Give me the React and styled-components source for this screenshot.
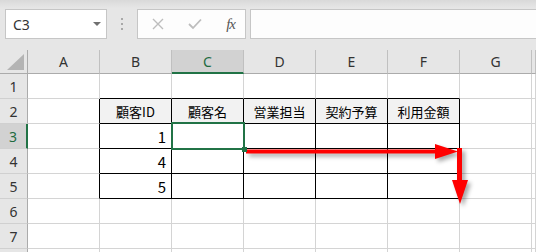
import React from 'react';
import styled, { createGlobalStyle, css } from 'styled-components';

const GlobalStyle = createGlobalStyle`
  html, body {
    margin: 0;
    padding: 0;
    background: #ffffff;
    font-family: "Noto Sans", "Liberation Sans", sans-serif;
  }
`

const Root = styled.div`
  position: relative;
  width: 536px;
  height: 252px;
  overflow: hidden;
`

const Toolbar = styled.div`
  display: flex;
  align-items: center;
  height: 50px;
  box-sizing: border-box;
  padding: 9px 0 11px 5px;
  background: linear-gradient(#d9d9d9, #e6e6e6 8px);
`

const NameBox = styled.div`
  display: flex;
  align-items: center;
  justify-content: space-between;
  width: 102px;
  height: 30px;
  box-sizing: border-box;
  padding: 0 5px 0 7px;
  background: #ffffff;
  border: 1px solid #c6c6c6;
  font-size: 14px;
  color: #333;
`

const DropArrow = styled.span`
  width: 0;
  height: 0;
  border-left: 4px solid transparent;
  border-right: 4px solid transparent;
  border-top: 4px solid #707070;
`

const Grip = styled.div`
  display: flex;
  flex-direction: column;
  gap: 3px;
  margin: 0 14px 0 14px;
  span {
    width: 2px;
    height: 2px;
    background: #a8a8a8;
  }
`

const FormulaButtons = styled.div`
  display: flex;
  align-items: center;
  justify-content: space-between;
  width: 109px;
  height: 30px;
  box-sizing: border-box;
  padding: 0 10px 0 14px;
  background: #fdfdfd;
  border: 1px solid #c6c6c6;
`

const Fx = styled.span`
  font-family: "Liberation Serif", serif;
  font-style: italic;
  font-size: 15px;
  color: #555;
  letter-spacing: -1px;
`

const FormulaInput = styled.div`
  flex: 1;
  height: 30px;
  margin-left: 4px;
  box-sizing: border-box;
  background: #fdfdfd;
  border: 1px solid #c6c6c6;
  border-right: none;
`

const Sheet = styled.div`
  display: grid;
  grid-template-columns: 28px repeat(7, 72px) 1fr;
  grid-template-rows: 24px repeat(8, 25px);
`

const Cell = styled.div`
  position: relative;
  box-sizing: border-box;
  display: flex;
  align-items: center;
  justify-content: ${p => p.$align || 'center'};
  padding: ${p => (p.$align === 'flex-end' ? '0 5px 0 0' : '0')};
  background: ${p => p.$bg || '#ffffff'};
  border-right: 1px solid ${p => p.$right || '#d4d4d4'};
  border-bottom: 1px solid ${p => p.$bottom || '#d4d4d4'};
  font-family: "Noto Sans CJK JP", "Noto Sans", sans-serif;
  font-size: ${p => (p.$num ? '15px' : '13px')};
  color: #000;
  ${p => p.$selected && css`
    &::after {
      content: "";
      position: absolute;
      top: -2px;
      left: -1px;
      right: -2px;
      bottom: -2px;
      border: 2px solid #217346;
      z-index: 2;
    }
    &::before {
      content: "";
      position: absolute;
      right: -4px;
      bottom: -4px;
      width: 5px;
      height: 5px;
      background: #217346;
      z-index: 3;
    }
  `}
`

const HeadCell = styled.div`
  box-sizing: border-box;
  display: flex;
  align-items: center;
  justify-content: center;
  background: ${p => (p.$active ? '#d2d2d2' : '#e6e6e6')};
  color: ${p => (p.$active ? '#1e6b41' : '#333')};
  font-size: 14px;
  border-right: ${p => (p.$rowHead && p.$active ? '2px solid #217346' : `1px solid ${p.$rowHead ? '#ababab' : '#c0c0c0'}`)};
  border-bottom: ${p => (!p.$rowHead && p.$active ? '2px solid #217346' : `1px solid ${p.$rowHead ? '#d0d0d0' : '#ababab'}`)};
`

const Corner = styled.div`
  box-sizing: border-box;
  position: relative;
  background: #e6e6e6;
  border-right: 1px solid #ababab;
  border-bottom: 1px solid #ababab;
  &::after {
    content: "";
    position: absolute;
    right: 3px;
    bottom: 3px;
    width: 0;
    height: 0;
    border-left: 17px solid transparent;
    border-bottom: 16px solid #b4b4b4;
  }
`

const Overlay = styled.svg`
  position: absolute;
  top: 0;
  left: 0;
  pointer-events: none;
  filter: drop-shadow(3px 3px 2px rgba(0, 0, 0, 0.35));
`

const cols = ['A', 'B', 'C', 'D', 'E', 'F', 'G', '']
const heads = ['顧客ID', '顧客名', '営業担当', '契約予算', '利用金額']
const ids = { 3: '1', 4: '4', 5: '5' }

function cellProps(r, c) {
  // c: 0 = A ... 7 = H ; table is B2:F5
  const inTable = r >= 2 && r <= 5 && c >= 1 && c <= 5
  const leftOfTable = r >= 2 && r <= 5 && c === 0
  const aboveTable = r === 1 && c >= 1 && c <= 5
  return {
    $right: inTable || leftOfTable ? '#000' : undefined,
    $bottom: inTable || aboveTable ? '#000' : undefined,
    $bg: r === 2 && inTable ? '#f2f2f2' : undefined,
  }
}

function App() {
  const rows = [1, 2, 3, 4, 5, 6, 7, 8]
  return (
    <Root>
      <GlobalStyle />
      <Toolbar>
        <NameBox>
          C3
          <DropArrow />
        </NameBox>
        <Grip><span /><span /><span /></Grip>
        <FormulaButtons>
          <svg width="12" height="12" viewBox="0 0 12 12">
            <path d="M1 1 L11 11 M11 1 L1 11" stroke="#bdbdbd" strokeWidth="1.4" fill="none" />
          </svg>
          <svg width="14" height="12" viewBox="0 0 14 12">
            <path d="M1 6 L5 10 L13 1.5" stroke="#bdbdbd" strokeWidth="1.8" fill="none" />
          </svg>
          <Fx>fx</Fx>
        </FormulaButtons>
        <FormulaInput />
      </Toolbar>
      <Sheet>
        <Corner />
        {cols.map(c => (
          <HeadCell key={c || 'h'} $active={c === 'C'}>{c}</HeadCell>
        ))}
        {rows.map(r => (
          <React.Fragment key={r}>
            {/* row 8 only peeks in at the bottom edge, its label is below the window */}
            <HeadCell $rowHead $active={r === 3}>{r < 8 ? r : ''}</HeadCell>
            {cols.map((c, ci) => {
              const p = cellProps(r, ci)
              let content = null
              let num = false
              if (r === 2 && ci >= 1 && ci <= 5) content = heads[ci - 1]
              if (ci === 1 && ids[r]) { content = ids[r]; num = true }
              return (
                <Cell
                  key={ci}
                  {...p}
                  $num={num}
                  $align={num ? 'flex-end' : undefined}
                  $selected={r === 3 && ci === 2}
                >
                  {content}
                </Cell>
              )
            })}
          </React.Fragment>
        ))}
      </Sheet>
      <Overlay width="536" height="252" viewBox="0 0 536 252">
        <rect x="246" y="149.5" width="192" height="4" fill="#ff0000" />
        <polygon points="435,144 458,151.5 435,159" fill="#ff0000" />
        <rect x="457" y="148" width="5" height="34" fill="#ff0000" />
        <polygon points="452,180 468,180 460,204" fill="#ff0000" />
      </Overlay>
    </Root>
  );
}

export default App;
